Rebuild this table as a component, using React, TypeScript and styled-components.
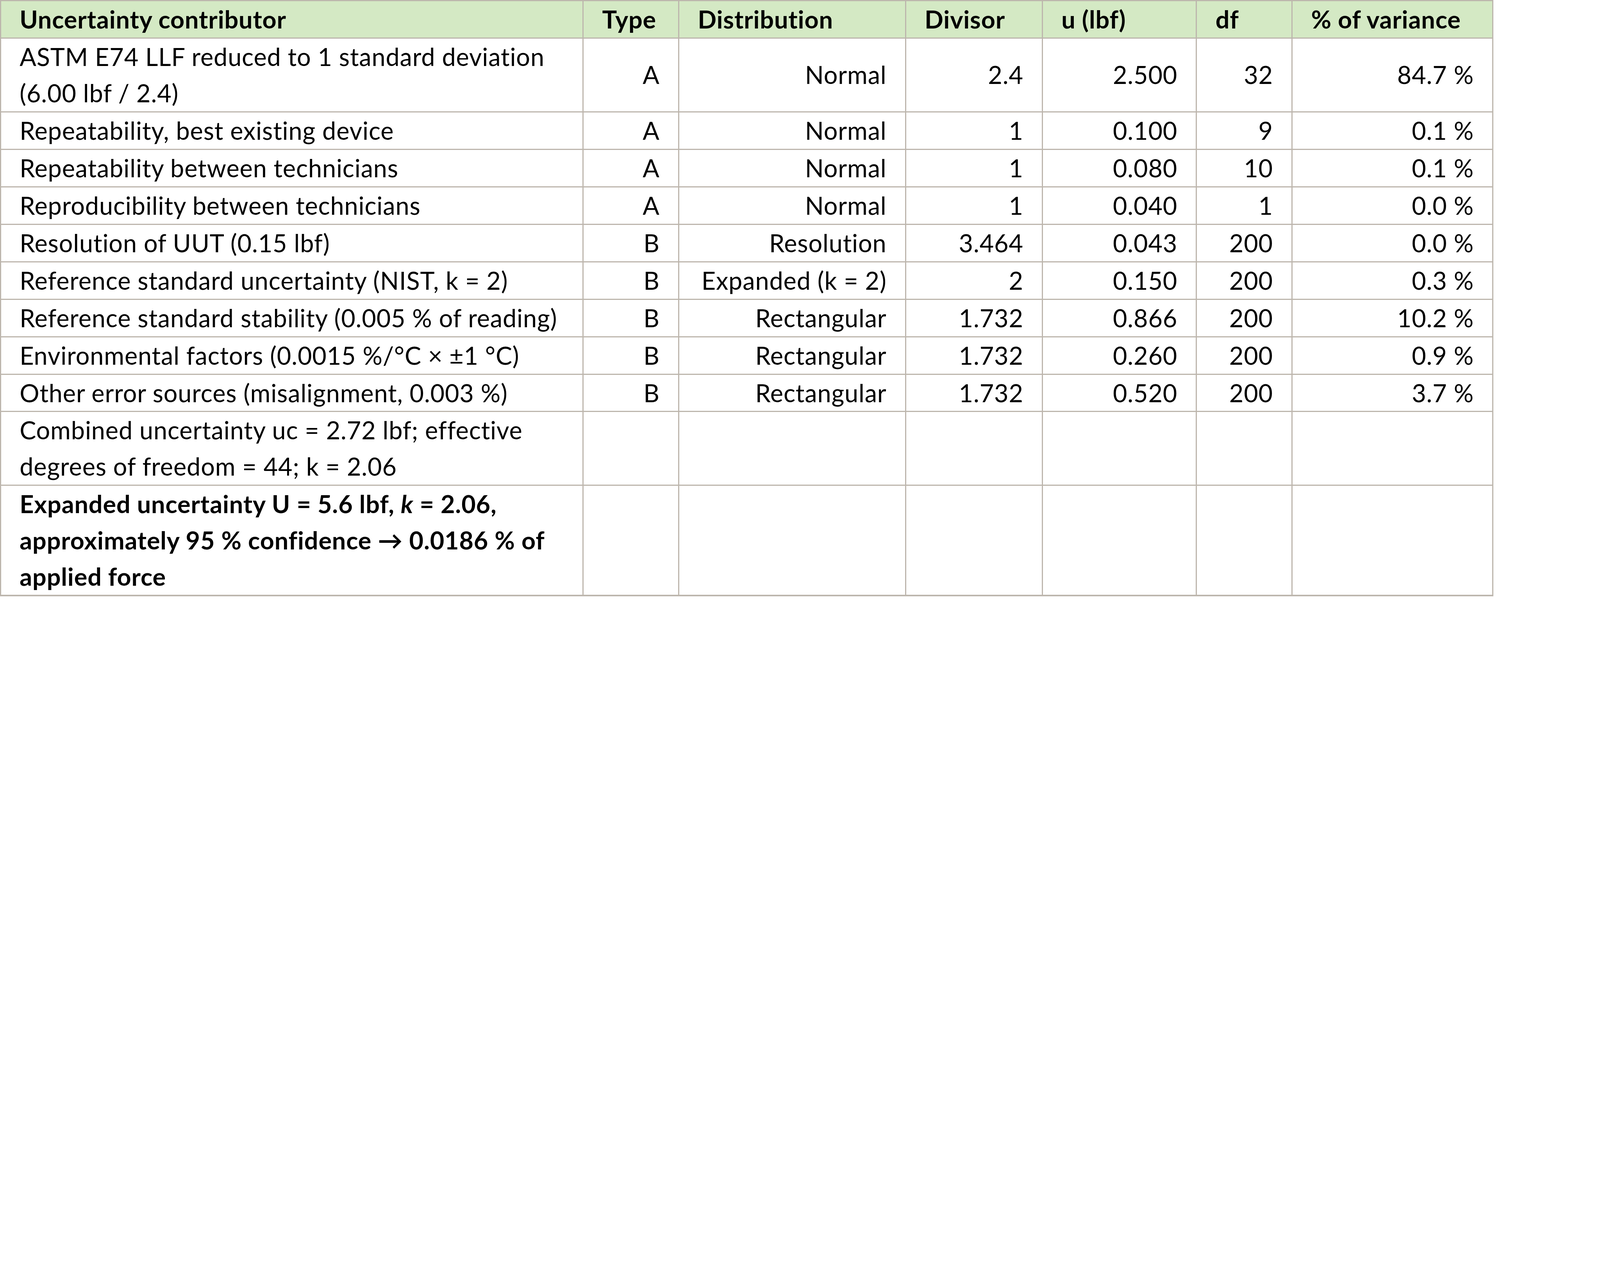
import React from "react";
import styled, { createGlobalStyle } from "styled-components";

// all sizes are given in pixels of the 7800px-wide capture and scaled by the viewport width
const s = (n: number) => `calc(${n} * 100vw / 7800)`;

const LINE = "#bdb6ad";

const GlobalStyle = createGlobalStyle`
  html, body {
    margin: 0;
    padding: 0;
    background: #ffffff;
    overflow: hidden;
  }
`;

const Page = styled.div`
  background: #ffffff;
`;

const Table = styled.table`
  border-collapse: collapse;
  table-layout: fixed;
  width: ${s(7275)};
  font-family: "Lato", "Liberation Sans", sans-serif;
  font-size: ${s(120)};
  letter-spacing: ${s(1.6)};
  line-height: ${s(177)};
  color: #000000;
`;

const HeadCell = styled.th`
  background: #d4e9c4;
  font-weight: 700;
  text-align: left;
  vertical-align: top;
  white-space: nowrap;
  padding: 0 ${s(90)};
  border: ${s(6)} solid ${LINE};
`;

const Row = styled.tr<{ $last?: boolean }>`
  td {
    border-bottom-width: ${(p) => (p.$last ? s(9) : s(6))};
  }
`;

const Cell = styled.td<{ $align?: "left" | "right"; $bold?: boolean }>`
  text-align: ${(p) => p.$align ?? "right"};
  vertical-align: ${(p) => (p.$align === "left" ? "top" : "middle")};
  font-weight: ${(p) => (p.$bold ? 700 : 400)};
  white-space: nowrap;
  padding: 0 ${s(90)};
  border: ${s(6)} solid ${LINE};
`;

const columns = [
  { title: "Uncertainty contributor", width: 2840 },
  { title: "Type", width: 466 },
  { title: "Distribution", width: 1106 },
  { title: "Divisor", width: 667 },
  { title: "u (lbf)", width: 751 },
  { title: "df", width: 466 },
  { title: "% of variance", width: 979 },
];

type Contributor = {
  label: React.ReactNode;
  type: string;
  dist: string;
  divisor: string;
  u: string;
  df: string;
  pct: string;
};

const contributors: Contributor[] = [
  {
    label: (
      <>
        ASTM E74 LLF reduced to 1 standard deviation
        <br />
        (6.00 lbf / 2.4)
      </>
    ),
    type: "A",
    dist: "Normal",
    divisor: "2.4",
    u: "2.500",
    df: "32",
    pct: "84.7 %",
  },
  { label: "Repeatability, best existing device", type: "A", dist: "Normal", divisor: "1", u: "0.100", df: "9", pct: "0.1 %" },
  { label: "Repeatability between technicians", type: "A", dist: "Normal", divisor: "1", u: "0.080", df: "10", pct: "0.1 %" },
  { label: "Reproducibility between technicians", type: "A", dist: "Normal", divisor: "1", u: "0.040", df: "1", pct: "0.0 %" },
  { label: "Resolution of UUT (0.15 lbf)", type: "B", dist: "Resolution", divisor: "3.464", u: "0.043", df: "200", pct: "0.0 %" },
  { label: "Reference standard uncertainty (NIST, k = 2)", type: "B", dist: "Expanded (k = 2)", divisor: "2", u: "0.150", df: "200", pct: "0.3 %" },
  { label: "Reference standard stability (0.005 % of reading)", type: "B", dist: "Rectangular", divisor: "1.732", u: "0.866", df: "200", pct: "10.2 %" },
  { label: "Environmental factors (0.0015 %/°C × ±1 °C)", type: "B", dist: "Rectangular", divisor: "1.732", u: "0.260", df: "200", pct: "0.9 %" },
  { label: "Other error sources (misalignment, 0.003 %)", type: "B", dist: "Rectangular", divisor: "1.732", u: "0.520", df: "200", pct: "3.7 %" },
];

function EmptyCells() {
  return (
    <>
      {columns.slice(1).map((c) => (
        <Cell key={c.title} />
      ))}
    </>
  );
}

export default function App() {
  return (
    <Page>
      <GlobalStyle />
      <Table>
        <colgroup>
          {columns.map((c) => (
            <col key={c.title} style={{ width: s(c.width) }} />
          ))}
        </colgroup>
        <thead>
          <tr>
            {columns.map((c) => (
              <HeadCell key={c.title}>{c.title}</HeadCell>
            ))}
          </tr>
        </thead>
        <tbody>
          {contributors.map((r, i) => (
            <Row key={i}>
              <Cell $align="left">{r.label}</Cell>
              <Cell>{r.type}</Cell>
              <Cell>{r.dist}</Cell>
              <Cell>{r.divisor}</Cell>
              <Cell>{r.u}</Cell>
              <Cell>{r.df}</Cell>
              <Cell>{r.pct}</Cell>
            </Row>
          ))}
          <Row>
            <Cell $align="left">
              Combined uncertainty uc = 2.72 lbf; effective
              <br />
              degrees of freedom = 44; k = 2.06
            </Cell>
            <EmptyCells />
          </Row>
          <Row $last>
            <Cell $align="left" $bold>
              Expanded uncertainty U = 5.6 lbf, <i>k</i> = 2.06,
              <br />
              approximately 95 % confidence → 0.0186 % of
              <br />
              applied force
            </Cell>
            <EmptyCells />
          </Row>
        </tbody>
      </Table>
    </Page>
  );
}
